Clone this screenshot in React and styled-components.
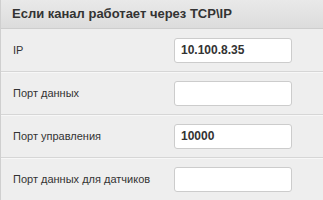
import React from "react";
import styled, { createGlobalStyle } from "styled-components";

const Global = createGlobalStyle`
  body {
    margin: 0;
    background: #eeeeee;
    font-family: "Liberation Sans", Arial, sans-serif;
  }
`;

const Panel = styled.div`
  border-left: 1px solid #cfcfcf;
  background: #eeeeee;
`;

const Header = styled.div`
  height: 28px;
  line-height: 28px;
  padding-left: 11px;
  background: linear-gradient(#e9e9e9, #dcdcdc);
  border-bottom: 1px solid #cdcdcd;
  font-size: 13px;
  font-weight: bold;
  color: #333333;
`;

const Row = styled.div`
  display: flex;
  align-items: center;
  height: 42px;
  border-bottom: 1px solid #d6d6d6;
  box-shadow: 0 1px 0 #f7f7f7;
`;

const Label = styled.label`
  width: 161px;
  padding-left: 12px;
  font-size: 11px;
  color: #333333;
`;

const Field = styled.input`
  box-sizing: border-box;
  width: 118px;
  height: 25px;
  padding: 0 6px;
  border: 1px solid #cccccc;
  border-radius: 3px;
  background: #ffffff;
  font-family: inherit;
  font-size: 12px;
  font-weight: bold;
  color: #333333;
  outline: none;
`;

const fields = [
  { label: "IP", value: "10.100.8.35" },
  { label: "Порт данных", value: "" },
  { label: "Порт управления", value: "10000" },
  { label: "Порт данных для датчиков", value: "" },
];

export default function App() {
  return (
    <>
      <Global />
      <Panel>
        <Header>Если канал работает через TCP\IP</Header>
        {fields.map((f) => (
          <Row key={f.label}>
            <Label>{f.label}</Label>
            <Field defaultValue={f.value} />
          </Row>
        ))}
      </Panel>
    </>
  );
}
